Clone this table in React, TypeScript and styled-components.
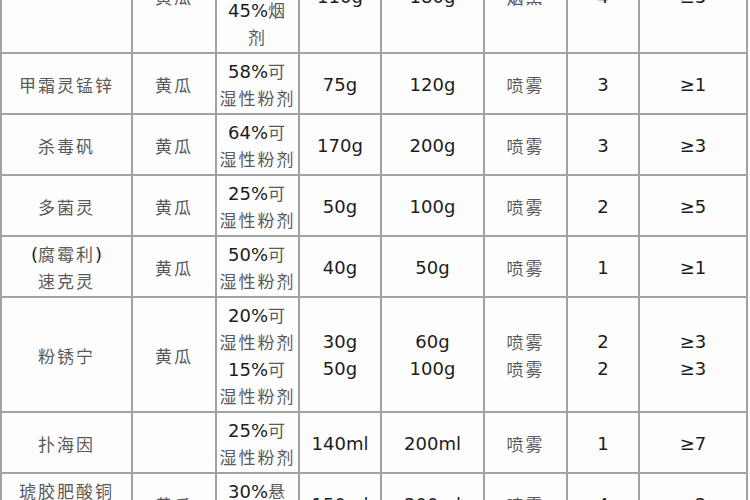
import styled, { createGlobalStyle } from 'styled-components'

const GlobalStyle = createGlobalStyle`
  html, body {
    margin: 0;
    padding: 0;
    background: #ffffff;
  }
`

const Viewport = styled.div`
  width: 750px;
  height: 500px;
  overflow: hidden;
  background: #fdfdfd;
`

const Table = styled.table`
  width: 746px;
  margin-top: -63px;
  border-collapse: collapse;
  table-layout: fixed;
  font-family: "DejaVu Sans", "Noto Sans CJK SC", sans-serif;
  font-size: 18px;
  color: #1c1c1c;
`

const Cell = styled.td`
  border: 2px solid #a2a2a2;
  padding: 3px 1px 2px;
  text-align: center;
  vertical-align: middle;
  white-space: nowrap;
  overflow: hidden;
`

const Line = styled.div`
  height: 27px;
  line-height: 27px;
`

const Han = styled.span`
  font-family: "Noto Sans CJK SC", sans-serif;
  font-size: 17px;
  letter-spacing: 2px;
  color: #5a5a5a;
`

const colWidths = [131, 84, 83, 82, 103, 83, 72, 108]

const rows: string[][] = [
  ['', '黄瓜', '湿性粉剂\n或\n45%烟\n剂', '110g', '180g', '烟熏', '4', '≥3'],
  ['甲霜灵锰锌', '黄瓜', '58%可\n湿性粉剂', '75g', '120g', '喷雾', '3', '≥1'],
  ['杀毒矾', '黄瓜', '64%可\n湿性粉剂', '170g', '200g', '喷雾', '3', '≥3'],
  ['多菌灵', '黄瓜', '25%可\n湿性粉剂', '50g', '100g', '喷雾', '2', '≥5'],
  ['(腐霉利)\n速克灵', '黄瓜', '50%可\n湿性粉剂', '40g', '50g', '喷雾', '1', '≥1'],
  [
    '粉锈宁',
    '黄瓜',
    '20%可\n湿性粉剂\n15%可\n湿性粉剂',
    '30g\n50g',
    '60g\n100g',
    '喷雾\n喷雾',
    '2\n2',
    '≥3\n≥3',
  ],
  ['扑海因', '', '25%可\n湿性粉剂', '140ml', '200ml', '喷雾', '1', '≥7'],
  ['琥胶肥酸铜\n(DT)', '黄瓜', '30%悬\n浮剂', '150ml', '300ml', '喷雾', '4', '≥3'],
]

function CellText({ value }: { value: string }) {
  const lines = value.split('\n')
  return (
    <>
      {lines.map((line, i) => (
        <Line key={i}>
          {line.split(/([\u4e00-\u9fff]+)/).map((part, j) =>
            /[\u4e00-\u9fff]/.test(part) ? <Han key={j}>{part}</Han> : part
          )}
          {line === '' && '\u00a0'}
        </Line>
      ))}
    </>
  )
}

export default function App() {
  return (
    <>
      <GlobalStyle />
      <Viewport>
        <Table>
          <colgroup>
            {colWidths.map((w, i) => (
              <col key={i} style={{ width: w }} />
            ))}
          </colgroup>
          <tbody>
            {rows.map((row, r) => (
              <tr key={r}>
                {row.map((value, c) => (
                  <Cell key={c}>
                    <CellText value={value} />
                  </Cell>
                ))}
              </tr>
            ))}
          </tbody>
        </Table>
      </Viewport>
    </>
  )
}
